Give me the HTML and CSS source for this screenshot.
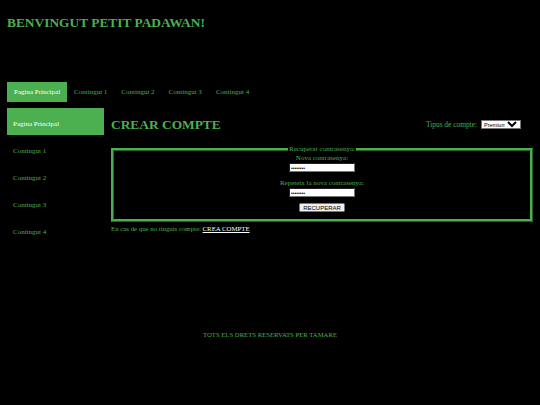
FILE: index.html
```html
<!DOCTYPE html>
<html lang="ca">
<head>
<meta charset="utf-8">
<title>Benvingut petit padawan</title>
<link rel="stylesheet" href="styles.css">
</head>
<body>
<header class="site-header">
  <h1 class="site-title">BENVINGUT PETIT PADAWAN!</h1>
</header>
<nav class="topnav">
  <a class="topnav-item active" href="#">Pagina Principal</a>
  <a class="topnav-item" href="#">Contingut 1</a>
  <a class="topnav-item" href="#">Contingut 2</a>
  <a class="topnav-item" href="#">Contingut 3</a>
  <a class="topnav-item" href="#">Contingut 4</a>
</nav>
<div class="layout">
  <aside class="sidebar">
    <a class="side-item active" href="#">Pagina Principal</a>
    <a class="side-item" href="#">Contingut 1</a>
    <a class="side-item" href="#">Contingut 2</a>
    <a class="side-item" href="#">Contingut 3</a>
    <a class="side-item" href="#">Contingut 4</a>
  </aside>
  <main class="content">
    <div class="content-head">
      <h2 class="page-title">CREAR COMPTE</h2>
      <label class="account-type">Tipus de compte:
        <select class="account-select">
          <option>Premium</option>
          <option>Basic</option>
        </select>
      </label>
    </div>
    <form class="recover">
      <fieldset class="recover-box">
        <legend class="recover-legend">Recuperar contrasenya:</legend>
        <label class="field-label">Nova contrasenya:</label>
        <input class="field-input" type="password" value="12345678">
        <label class="field-label second">Repeteix la nova contrasenya:</label>
        <input class="field-input" type="password" value="12345678">
        <button class="recover-btn" type="button">RECUPERAR</button>
      </fieldset>
    </form>
    <p class="signup-note">En cas de que no tinguis compte: <a class="signup-link" href="#">CREA COMPTE</a></p>
  </main>
</div>
<footer class="site-footer">TOTS ELS DRETS RESERVATS PER TAMARE</footer>
</body>
</html>
```
FILE: styles.css
```css
html, body {
  margin: 0;
  background: #000;
}
body {
  padding: 0 7px;
  font-family: "Liberation Serif", "Times New Roman", serif;
  font-size: 7px;
  color: #4CAF50;
}
.site-header {
  height: 82px;
  box-sizing: border-box;
  padding-top: 14px;
}
.site-title {
  margin: 0;
  font-size: 13.4px;
  line-height: 17px;
  font-weight: bold;
  color: #4CAF50;
}
.topnav {
  display: flex;
}
.topnav-item {
  display: block;
  padding: 5px 7px;
  line-height: 10px;
  color: #4CAF50;
  text-decoration: none;
}
.topnav-item.active {
  background: #4CAF50;
  color: #fff;
}
.layout {
  display: flex;
  gap: 7px;
  margin-top: 6px;
}
.sidebar {
  width: 97px;
  flex: none;
  display: flex;
  flex-direction: column;
}
.side-item {
  display: block;
  padding: 11px 6px 5px;
  line-height: 11px;
  color: #4CAF50;
  text-decoration: none;
}
.side-item.active {
  background: #4CAF50;
  color: #fff;
}
.content {
  flex: 1;
}
.content-head {
  display: flex;
  justify-content: space-between;
  align-items: center;
  height: 33px;
  padding-right: 12px;
}
.page-title {
  margin: 0;
  font-size: 13.4px;
  font-weight: bold;
  color: #4CAF50;
}
.account-type {
  display: flex;
  align-items: center;
  gap: 4px;
  font-size: 7.4px;
}
.account-select {
  zoom: 0.5;
  width: 80px;
  height: 18px;
  font-family: "Liberation Sans", Arial, sans-serif;
  font-size: 11px;
  background: #fff;
  color: #000;
}
.recover {
  margin: 4px 0 0;
}
.recover-box {
  margin: 0;
  padding: 0 0 7px;
  border: 3px ridge #4CAF50;
  display: flex;
  flex-direction: column;
  align-items: center;
}
.recover-legend {
  margin: 0 auto;
  padding: 0 1px;
  line-height: 9px;
}
.field-label {
  line-height: 9px;
}
.field-label.second {
  margin-top: 7px;
}
.field-input {
  zoom: 0.5;
  box-sizing: border-box;
  width: 132px;
  height: 18px;
  font-size: 10px;
  background: #fff;
  color: #000;
}
.recover-btn {
  zoom: 0.5;
  margin-top: 12px;
  box-sizing: border-box;
  height: 18px;
  padding: 0 6px;
  font-family: "Liberation Sans", Arial, sans-serif;
  font-size: 12px;
}
.signup-note {
  margin: 3px 0 0;
  font-size: 6.8px;
}
.signup-link {
  color: #fff;
}
.site-footer {
  margin-top: 88px;
  text-align: center;
  font-size: 6.7px;
}
```
